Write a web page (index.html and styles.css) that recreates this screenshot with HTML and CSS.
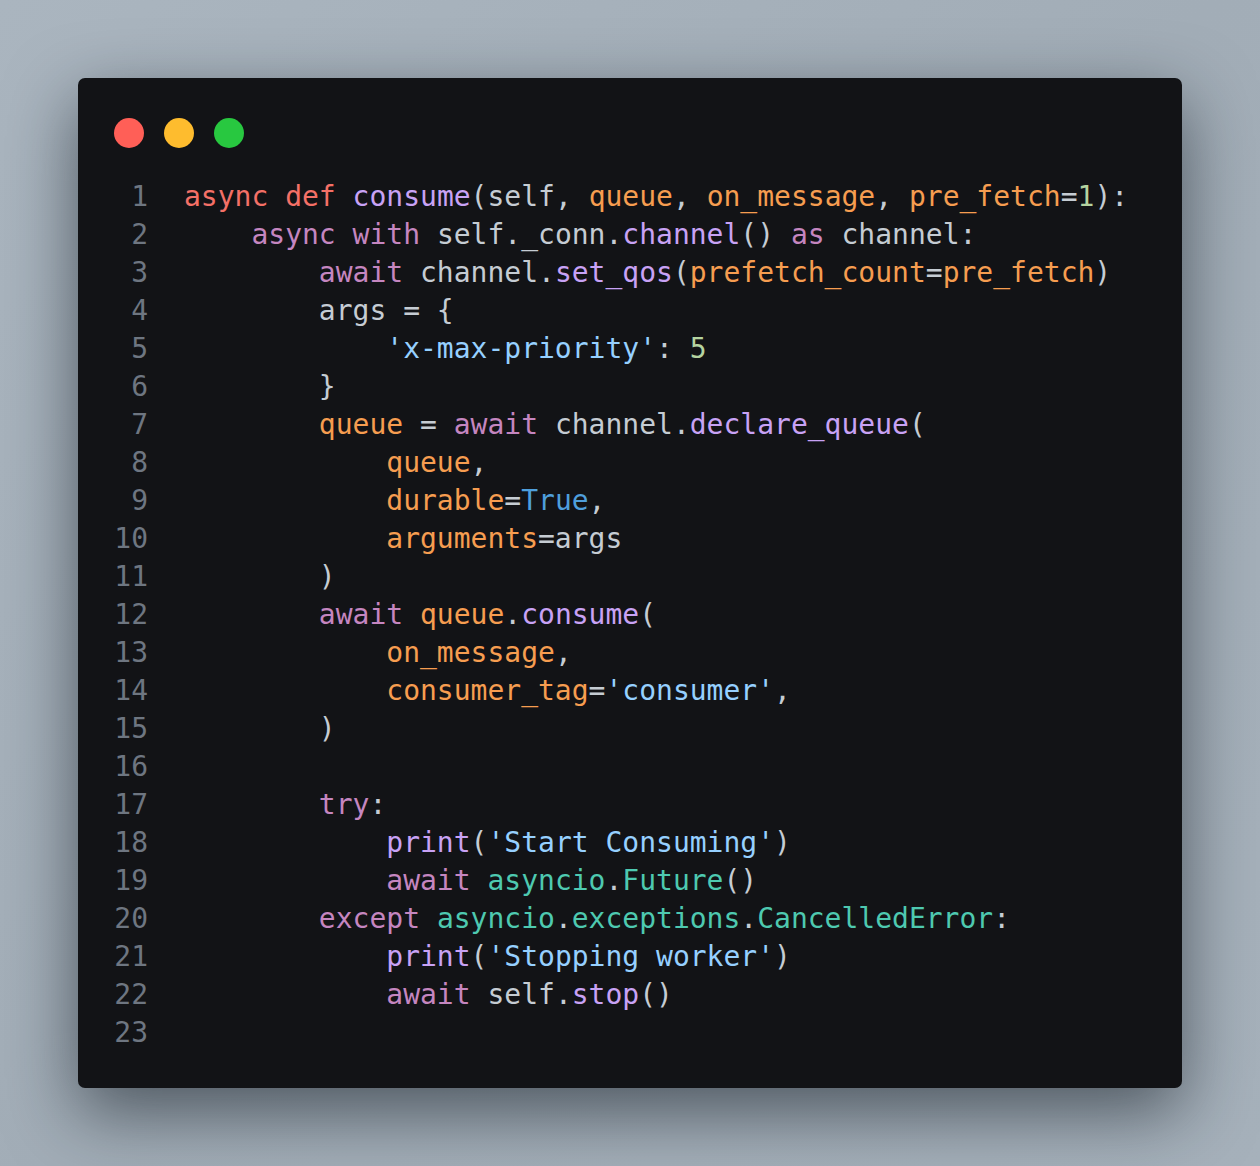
FILE: index.html
```html
<!DOCTYPE html>
<html>
<head>
<meta charset="utf-8">
<link rel="stylesheet" href="styles.css">
</head>
<body>
<div class="stage">
  <div class="window">
    <div class="lights">
      <span class="dot red"></span>
      <span class="dot yellow"></span>
      <span class="dot green"></span>
    </div>
    <div class="code">
      <pre class="nums">1
2
3
4
5
6
7
8
9
10
11
12
13
14
15
16
17
18
19
20
21
22
23</pre>
      <pre class="src"><span class="kr">async</span> <span class="kr">def</span> <span class="fn">consume</span>(self, <span class="pa">queue</span>, <span class="pa">on_message</span>, <span class="pa">pre_fetch</span>=<span class="nu">1</span>):
    <span class="kw">async</span> <span class="kw">with</span> self._conn.<span class="fn">channel</span>() <span class="kw">as</span> channel:
        <span class="kw">await</span> channel.<span class="fn">set_qos</span>(<span class="pa">prefetch_count</span>=<span class="pa">pre_fetch</span>)
        args = {
            <span class="st">'x-max-priority'</span>: <span class="nu">5</span>
        }
        <span class="pa">queue</span> = <span class="kw">await</span> channel.<span class="fn">declare_queue</span>(
            <span class="pa">queue</span>,
            <span class="pa">durable</span>=<span class="bo">True</span>,
            <span class="pa">arguments</span>=args
        )
        <span class="kw">await</span> <span class="pa">queue</span>.<span class="fn">consume</span>(
            <span class="pa">on_message</span>,
            <span class="pa">consumer_tag</span>=<span class="st">'consumer'</span>,
        )

        <span class="kw">try</span>:
            <span class="fn">print</span>(<span class="st">'Start Consuming'</span>)
            <span class="kw">await</span> <span class="cl">asyncio</span>.<span class="cl">Future</span>()
        <span class="kw">except</span> <span class="cl">asyncio</span>.<span class="cl">exceptions</span>.<span class="cl">CancelledError</span>:
            <span class="fn">print</span>(<span class="st">'Stopping worker'</span>)
            <span class="kw">await</span> self.<span class="fn">stop</span>()
</pre>
    </div>
  </div>
</div>
</body>
</html>
```

FILE: styles.css
```css
html, body {
  margin: 0;
  padding: 0;
}
body {
  width: 1260px;
  height: 1166px;
  background: linear-gradient(135deg, #aab5bf 0%, #a2adb7 50%, #a6b1bb 100%);
  overflow: hidden;
}
.stage {
  padding: 78px;
  display: flex;
  justify-content: center;
}
.window {
  width: 1104px;
  height: 1010px;
  box-sizing: border-box;
  background: #121316;
  border-radius: 7px;
  box-shadow: 0 24px 70px rgba(20, 28, 36, 0.6);
  padding: 40px 36px 0 36px;
}
.lights {
  display: flex;
  gap: 20px;
  height: 30px;
}
.dot {
  width: 30px;
  height: 30px;
  border-radius: 50%;
  display: block;
}
.red { background: #ff5f57; }
.yellow { background: #febc2e; }
.green { background: #28c840; }
.code {
  display: flex;
  margin-top: 30px;
  gap: 36px;
}
pre {
  margin: 0;
  font-family: "DejaVu Sans Mono", monospace;
  font-size: 28px;
  line-height: 38px;
}
.nums {
  width: 34px;
  text-align: right;
  color: #6e7681;
}
.src {
  color: #c5ccd3;
}
.kr { color: #f47067; }
.kw { color: #c586c0; }
.fn { color: #c8a2f5; }
.pa { color: #f69d50; }
.nu { color: #b5d4a0; }
.st { color: #96d0ff; }
.bo { color: #4f9fdc; }
.cl { color: #4ec9b0; }
```
